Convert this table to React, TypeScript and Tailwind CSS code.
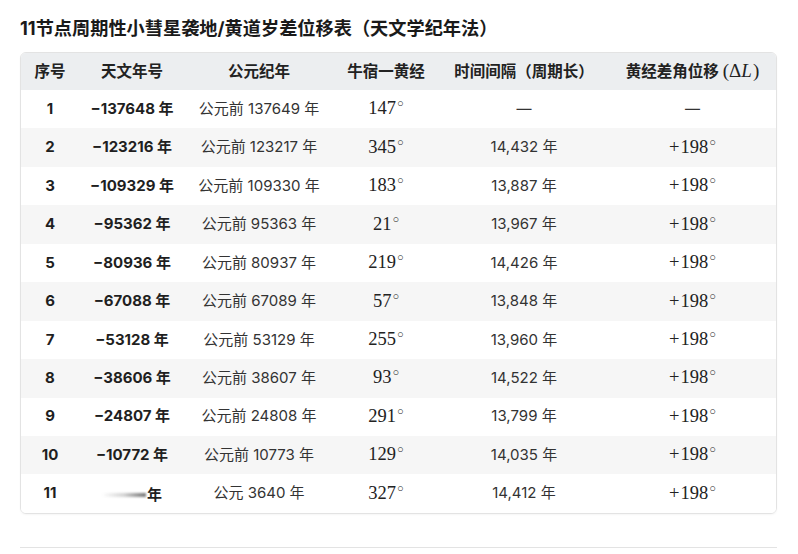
import React from "react";

const rows = [
  ["1", "−137648 年", "公元前 137649 年", "147", "—", null],
  ["2", "−123216 年", "公元前 123217 年", "345", "14,432 年", "+198"],
  ["3", "−109329 年", "公元前 109330 年", "183", "13,887 年", "+198"],
  ["4", "−95362 年", "公元前 95363 年", "21", "13,967 年", "+198"],
  ["5", "−80936 年", "公元前 80937 年", "219", "14,426 年", "+198"],
  ["6", "−67088 年", "公元前 67089 年", "57", "13,848 年", "+198"],
  ["7", "−53128 年", "公元前 53129 年", "255", "13,960 年", "+198"],
  ["8", "−38606 年", "公元前 38607 年", "93", "14,522 年", "+198"],
  ["9", "−24807 年", "公元前 24808 年", "291", "13,799 年", "+198"],
  ["10", "−10772 年", "公元前 10773 年", "129", "14,035 年", "+198"],
  ["11", "BLUR", "公元 3640 年", "327", "14,412 年", "+198"],
];

const sans = "font-['Inter','Noto_Sans_CJK_SC',sans-serif]";
const serif = "font-['Liberation_Serif','DejaVu_Serif',serif]";

function Deg({ v }: { v: string }) {
  return (
    <span className={`${serif} text-[18.5px] text-[#222]`}>
      {v.startsWith("+") ? (
        <>
          <span className="mr-[1px]">+</span>
          {v.slice(1)}
        </>
      ) : (
        v
      )}
      <span className="relative -top-[7px] text-[11px] ml-[1px]">○</span>
    </span>
  );
}

export default function App() {
  return (
    <div className={`${sans} w-[798px] h-[554px] bg-white text-[#1f1f1f] px-[20px] pt-[16px] overflow-hidden`}>
      <div className="text-[18.2px] leading-[24px] font-bold text-[#1a1a1a]">
        11节点周期性小彗星袭地/黄道岁差位移表（天文学纪年法）
      </div>
      <div className="mt-[12px] w-[757px] border border-[#e3e3e3] rounded-[6px] overflow-hidden shadow-[0_1px_2px_rgba(0,0,0,0.04)]">
        <table className="w-full border-collapse table-fixed">
          <colgroup>
            <col className="w-[58px]" />
            <col className="w-[106px]" />
            <col className="w-[148px]" />
            <col className="w-[106px]" />
            <col className="w-[170px]" />
            <col />
          </colgroup>
          <thead>
            <tr className="h-[37px] bg-[#eceef0] text-[15.5px] font-bold text-[#222]">
              <th className="text-center">序号</th>
              <th className="text-center">天文年号</th>
              <th className="text-center">公元纪年</th>
              <th className="text-center">牛宿一黄经</th>
              <th className="text-center">时间间隔（周期长）</th>
              <th className="text-center">
                黄经差角位移
                <span className={`${serif} font-normal text-[19px] ml-[4px]`}>
                  (Δ<i className="mr-[1px]">L</i>)
                </span>
              </th>
            </tr>
          </thead>
          <tbody>
            {rows.map((r, i) => (
              <tr key={i} className={`h-[38.45px] text-[15px] ${i % 2 === 1 ? "bg-[#f6f6f6]" : "bg-white"}`}>
                <td className="text-center font-bold">{r[0]}</td>
                <td className="text-center font-bold">
                  {r[1] === "BLUR" ? (
                    <span className="inline-flex items-center">
                      <span className="inline-block w-[44px] h-[4px] bg-gradient-to-r from-transparent via-[#d4d4d4] to-[#777] blur-[1.2px] mr-[1px]" />
                      <span>年</span>
                    </span>
                  ) : (
                    r[1]
                  )}
                </td>
                <td className="text-center text-[#333]">{r[2]}</td>
                <td className="text-center">
                  <Deg v={r[3] as string} />
                </td>
                <td className="text-center text-[#333]">{r[4]}</td>
                <td className="text-center text-[#333]">{r[5] ? <Deg v={r[5] as string} /> : "—"}</td>
              </tr>
            ))}
          </tbody>
        </table>
      </div>
      <div className="mt-[33px] w-[757px] border-t border-[#e3e3e3]" />
    </div>
  );
}
